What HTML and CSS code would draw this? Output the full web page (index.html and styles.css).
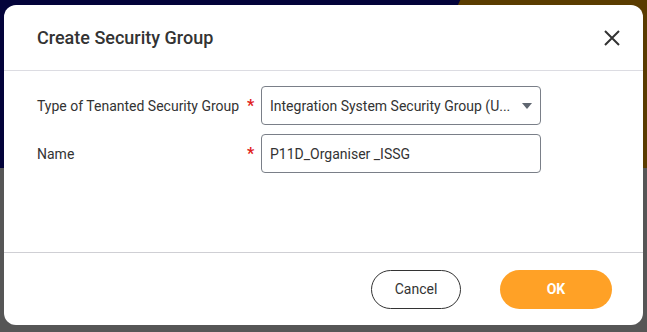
FILE: index.html
```html
<!DOCTYPE html>
<html lang="en">
<head>
  <meta charset="UTF-8" />
  <title>Create Security Group</title>
  <link rel="stylesheet" href="styles.css">
</head>
<body>

<div class="backdrop-deco"></div>

<div class="dialog">
  <div class="dialog-header">
    <h2>Create Security Group</h2>
    <button class="close-btn" aria-label="Close">
      <svg width="16" height="16" viewBox="0 0 16 16">
        <path d="M1 1 L15 15 M15 1 L1 15" stroke="#333" stroke-width="2" fill="none" />
      </svg>
    </button>
  </div>

  <div class="dialog-body">
    <div class="field-row">
      <label class="field-label">Type of Tenanted Security Group</label>
      <span class="required">*</span>
      <div class="field-input select">
        <span class="value">Integration System Security Group (U...</span>
        <span class="caret"></span>
      </div>
    </div>
    <div class="field-row">
      <label class="field-label">Name</label>
      <span class="required">*</span>
      <div class="field-input">
        <span class="value">P11D_Organiser _ISSG</span>
      </div>
    </div>
  </div>

  <div class="dialog-footer">
    <button class="btn cancel">Cancel</button>
    <button class="btn ok">OK</button>
  </div>
</div>

</body>
</html>
```

FILE: styles.css
```css
html, body {
  height: 100%;
  overflow: hidden;
}
body {
  margin: 0;
  padding: 5px 4px 0;
  box-sizing: border-box;
  font-family: Roboto, "Liberation Sans", sans-serif;
  background: linear-gradient(to bottom, #03033a 0, #03033a 168px, #565656 168px, #565656 100%);
  position: relative;
}
.backdrop-deco {
  position: absolute;
  top: -20px;
  left: 455px;
  right: 0;
  height: 188px;
  background: #5a3c00;
  border-radius: 40px 0 0 0;
}
.dialog {
  position: relative;
  width: 639px;
  height: 320px;
  background: #fff;
  border-radius: 12px;
  display: flex;
  flex-direction: column;
}
.dialog-header {
  height: 65px;
  display: flex;
  align-items: center;
  justify-content: space-between;
  padding: 0 23px 0 33px;
  border-bottom: 1px solid #dcdce2;
}
.dialog-header h2 {
  margin: 0;
  font-size: 18px;
  font-weight: 500;
  color: #333;
}
.close-btn {
  background: none;
  border: none;
  padding: 0;
  width: 16px;
  height: 16px;
  cursor: pointer;
}
.close-btn svg {
  display: block;
}
.dialog-body {
  flex: 1;
  padding: 15px 33px 0;
  display: flex;
  flex-direction: column;
  gap: 9px;
}
.field-row {
  display: flex;
  align-items: center;
}
.field-label {
  width: 210px;
  font-size: 14px;
  font-weight: 400;
  color: #333;
}
.required {
  width: 14px;
  color: #e0211b;
  font-size: 16px;
  font-weight: 700;
}
.field-input {
  width: 261px;
  height: 37px;
  border: 1px solid #7a7f88;
  border-radius: 4px;
  display: flex;
  align-items: center;
  padding: 0 9px 0 8px;
  font-size: 14px;
  color: #333;
}
.field-input .value {
  flex: 1;
}
.field-input.select {
  width: 262px;
  padding-right: 8px;
}
.caret {
  width: 0;
  height: 0;
  border-left: 5px solid transparent;
  border-right: 5px solid transparent;
  border-top: 6px solid #5f6670;
  margin-top: 1px;
}
.dialog-footer {
  height: 72px;
  border-top: 1px solid #cfcfd4;
  display: flex;
  align-items: center;
  justify-content: flex-end;
  gap: 39px;
  padding: 0 31px 0 0;
}
.btn {
  height: 39px;
  border-radius: 20px;
  font-family: Roboto, "Liberation Sans", sans-serif;
  font-size: 14px;
  cursor: pointer;
}
.btn.cancel {
  width: 90px;
  background: #fff;
  border: 1px solid #333;
  color: #333;
  font-weight: 400;
}
.btn.ok {
  width: 112px;
  background: #ffa126;
  border: none;
  color: #fff;
  font-weight: 700;
}
```
